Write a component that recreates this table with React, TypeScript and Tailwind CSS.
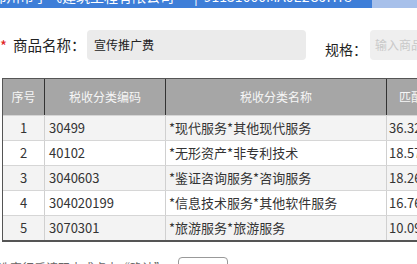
const rows = [
  { no: 1, code: '30499', name: '*现代服务*其他现代服务', score: '36.32%' },
  { no: 2, code: '40102', name: '*无形资产*非专利技术', score: '18.57%' },
  { no: 3, code: '3040603', name: '*鉴证咨询服务*咨询服务', score: '18.26%' },
  { no: 4, code: '304020199', name: '*信息技术服务*其他软件服务', score: '16.76%' },
  { no: 5, code: '3070301', name: '*旅游服务*旅游服务', score: '10.09%' },
];

const font = "font-['Microsoft_YaHei','Noto_Sans_CJK_SC',sans-serif]";

export default function App() {
  return (
    <div className={`w-[417px] h-[264px] overflow-hidden bg-white text-[#333] ${font}`}>
      {/* title bar, mostly scrolled off */}
      <div className="flex h-[8px] overflow-hidden bg-[#3e7ed8]">
        <div className="-mt-[12px] flex flex-1 gap-[6px] overflow-hidden whitespace-nowrap text-[14px] leading-[16px] text-white">
          <span className="-ml-[8px]">郑州市宇飞建筑工程有限公司”</span>
          <span>|</span>
          <span>91131000MA0E2UJHY8</span>
        </div>
        <div className="w-[45px] shrink-0 bg-[#a7c0ea]" />
      </div>

      {/* form row */}
      <div className="mt-[22px] flex h-[30px] items-center whitespace-nowrap">
        <span className="w-[13px] shrink-0 text-[15px] leading-none text-[#e02020]">*</span>
        <span className="w-[74px] shrink-0 text-[14.5px] text-[#222]">商品名称：</span>
        <div className="flex h-[30px] w-[219px] shrink-0 items-center rounded-[4px] bg-[#ebebeb] px-[7px] text-[12px] text-[#222]">
          宣传推广费
        </div>
        <span className="ml-[19px] mt-[8px] w-[45px] shrink-0 text-[14px] text-[#222]">规格：</span>
        <div className="flex h-[30px] flex-1 items-center overflow-hidden rounded-l-[4px] bg-[#efefef] px-[5px] text-[12px] text-[#c9c9c9]">
          输入商品规格
        </div>
      </div>

      {/* table */}
      <div className="ml-[2px] mt-[18px] w-[460px] border-l border-t border-b-2 border-[#555] text-[13px]">
        <div className="grid h-[36px] grid-cols-[42px_121px_221px_76px] bg-[#a6a6a6] text-[12px] text-[#f6f6f6]">
          <div className="flex items-center justify-center border-r border-[#333]">序号</div>
          <div className="flex items-center justify-center border-r border-[#333]">税收分类编码</div>
          <div className="flex items-center justify-center border-r border-[#333]">税收分类名称</div>
          <div className="flex items-center pl-[12px]">匹配度</div>
        </div>
        {rows.map((r) => (
          <div
            key={r.no}
            className={`grid h-[25px] grid-cols-[42px_121px_221px_76px] border-t border-[#d6d6d6] ${
              r.no % 2 === 1 ? 'bg-[#f3f3f3]' : 'bg-white'
            }`}
          >
            <div className="flex items-center justify-center border-r border-[#d0d0d0]">{r.no}</div>
            <div className="flex items-center border-r border-[#d0d0d0] pl-[4px]">{r.code}</div>
            <div className="flex items-center border-r border-[#d0d0d0] pl-[3px]">{r.name}</div>
            <div className="flex items-center pl-[2px]">{r.score}</div>
          </div>
        ))}
      </div>

      {/* footer */}
      <div className="mt-[15px] flex items-start gap-[6px] whitespace-nowrap text-[12px] text-[#666]">
        <span className="-ml-[2px] mt-[2px]">选定行后请双击或点击“确认”。</span>
        <button className="h-[26px] w-[50px] rounded-[4px] border border-[#999] bg-white text-[13px] text-[#444]">
          确认
        </button>
      </div>
    </div>
  );
}
